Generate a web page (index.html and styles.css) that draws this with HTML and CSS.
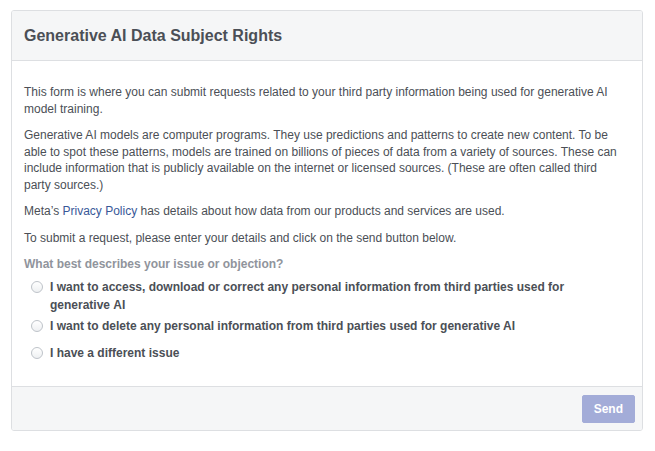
FILE: index.html
```html
<!DOCTYPE html>
<html lang="en">
<head>
<meta charset="utf-8">
<title>Generative AI Data Subject Rights</title>
<link rel="stylesheet" href="styles.css">
</head>
<body>
<div class="card">
  <div class="card-header">
    <h1 class="title">Generative AI Data Subject Rights</h1>
  </div>
  <div class="card-body">
    <p class="para">This form is where you can submit requests related to your third party information being used for generative AI model training.</p>
    <p class="para">Generative AI models are computer programs. They use predictions and patterns to create new content. To be able to spot these patterns, models are trained on billions of pieces of data from a variety of sources. These can include information that is publicly available on the internet or licensed sources. (These are often called third party&nbsp;sources.)</p>
    <p class="para">Meta’s <a class="link" href="#">Privacy Policy</a> has details about how data from our products and services are used.</p>
    <p class="para">To submit a request, please enter your details and click on the send button below.</p>
    <div class="question">What best describes your issue or objection?</div>
    <div class="options">
      <label class="option opt-first"><span class="radio"></span><span class="opt-text">I want to access, download or correct any personal information from third parties used for generative&nbsp;AI</span></label>
      <label class="option opt-second"><span class="radio"></span><span class="opt-text">I want to delete any personal information from third parties used for generative AI</span></label>
      <label class="option opt-third"><span class="radio"></span><span class="opt-text">I have a different issue</span></label>
    </div>
  </div>
  <div class="card-footer">
    <button class="send" type="button">Send</button>
  </div>
</div>
</body>
</html>
```

FILE: styles.css
```css
html, body {
  margin: 0;
  padding: 0;
  background: #ffffff;
}

body {
  padding: 10px 13px 0 11px;
  font-family: "Liberation Sans", Arial, Helvetica, sans-serif;
  font-size: 12px;
  color: #4b4f56;
}

.card {
  width: 630px;
  border: 1px solid #dddfe2;
  border-radius: 3px;
  background: #ffffff;
  overflow: hidden;
}

.card-header {
  height: 49px;
  display: flex;
  align-items: center;
  padding: 0 12px;
  background: #f5f6f7;
  border-bottom: 1px solid #dddfe2;
}

.title {
  margin: 0;
  font-size: 16px;
  font-weight: bold;
  color: #4b4f56;
  line-height: 20px;
}

.card-body {
  padding: 23px 12px 24px;
}

.para {
  margin: 0 0 10px;
  line-height: 16.5px;
}

.link {
  color: #385898;
  text-decoration: none;
}

.question {
  font-weight: bold;
  color: #90949c;
  line-height: 16.5px;
  margin-bottom: 5px;
}

.options {
  display: flex;
  flex-direction: column;
}

.option {
  display: flex;
  align-items: flex-start;
  gap: 7px;
  padding-left: 7px;
  font-weight: bold;
  line-height: 18px;
  color: #4b4f56;
}

.opt-second {
  margin-top: 3px;
}

.opt-third {
  margin-top: 9px;
}

.radio {
  flex: none;
  width: 12px;
  height: 12px;
  margin-top: 3px;
  box-sizing: border-box;
  border: 1px solid #bec3c9;
  border-radius: 50%;
  background: linear-gradient(#ffffff, #eef0f2);
}

.opt-text {
  flex: 1;
}

.card-footer {
  display: flex;
  justify-content: flex-end;
  padding: 8px 7px 7px;
  background: #f5f6f7;
  border-top: 1px solid #dddfe2;
}

.send {
  height: 28px;
  padding: 0 11px;
  border: 1px solid #a3acd8;
  border-radius: 2px;
  background: #a3acd8;
  color: #ffffff;
  font-family: "Liberation Sans", Arial, Helvetica, sans-serif;
  font-size: 12px;
  font-weight: bold;
}
```
